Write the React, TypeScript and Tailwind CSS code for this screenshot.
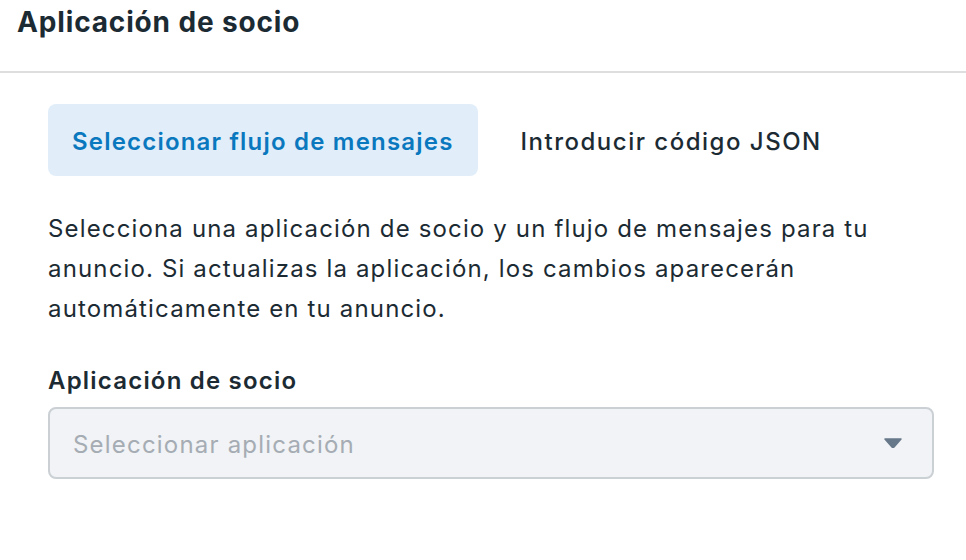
export default function App() {
  return (
    <div className="w-[966px] h-[560px] bg-white text-[#1c2b33] font-['Inter',sans-serif] overflow-hidden">
      <div className="h-[73px] border-b-2 border-[#dcdee0] px-[17px] pt-[3px]">
        <h1 className="text-[28px] leading-[38px] font-bold tracking-[0.85px]">Aplicación de socio</h1>
      </div>
      <div className="pl-[48px] pr-[32px] pt-[31px]">
        <div className="flex items-center gap-[43px]">
          <button className="h-[72px] px-[24px] pt-[3px] rounded-[8px] bg-[#e1edf9] text-[#0a78be] text-[24px] font-semibold tracking-[1.2px]">
            Seleccionar flujo de mensajes
          </button>
          <button className="h-[72px] pt-[3px] text-[24px] font-medium text-[#1c2b33] tracking-[1.5px]">Introducir código JSON</button>
        </div>
        <p className="mt-[33px] text-[24px] leading-[40px] max-w-[840px] tracking-[1.15px]">
          Selecciona una aplicación de socio y un flujo de mensajes para tu anuncio. Si actualizas la aplicación, los cambios aparecerán automáticamente en tu anuncio.
        </p>
        <div className="mt-[36px] text-[24px] leading-[32px] font-semibold tracking-[1.2px]">Aplicación de socio</div>
        <div className="mt-[10px] w-[886px] h-[72px] rounded-[8px] border-2 border-[#cbd0d5] bg-[#f1f3f6] flex items-center justify-between pl-[23px] pr-[30px]">
          <span className="pt-[3px] text-[24px] text-[#a5acb3] tracking-[1.2px]">Seleccionar aplicación</span>
          <svg width="18" height="10" viewBox="0 0 18 10">
            <path d="M1 1 H17 L10 9 Q9 10 8 9 Z" fill="#67788a" stroke="#67788a" strokeWidth="1.5" strokeLinejoin="round" />
          </svg>
        </div>
      </div>
    </div>
  );
}
